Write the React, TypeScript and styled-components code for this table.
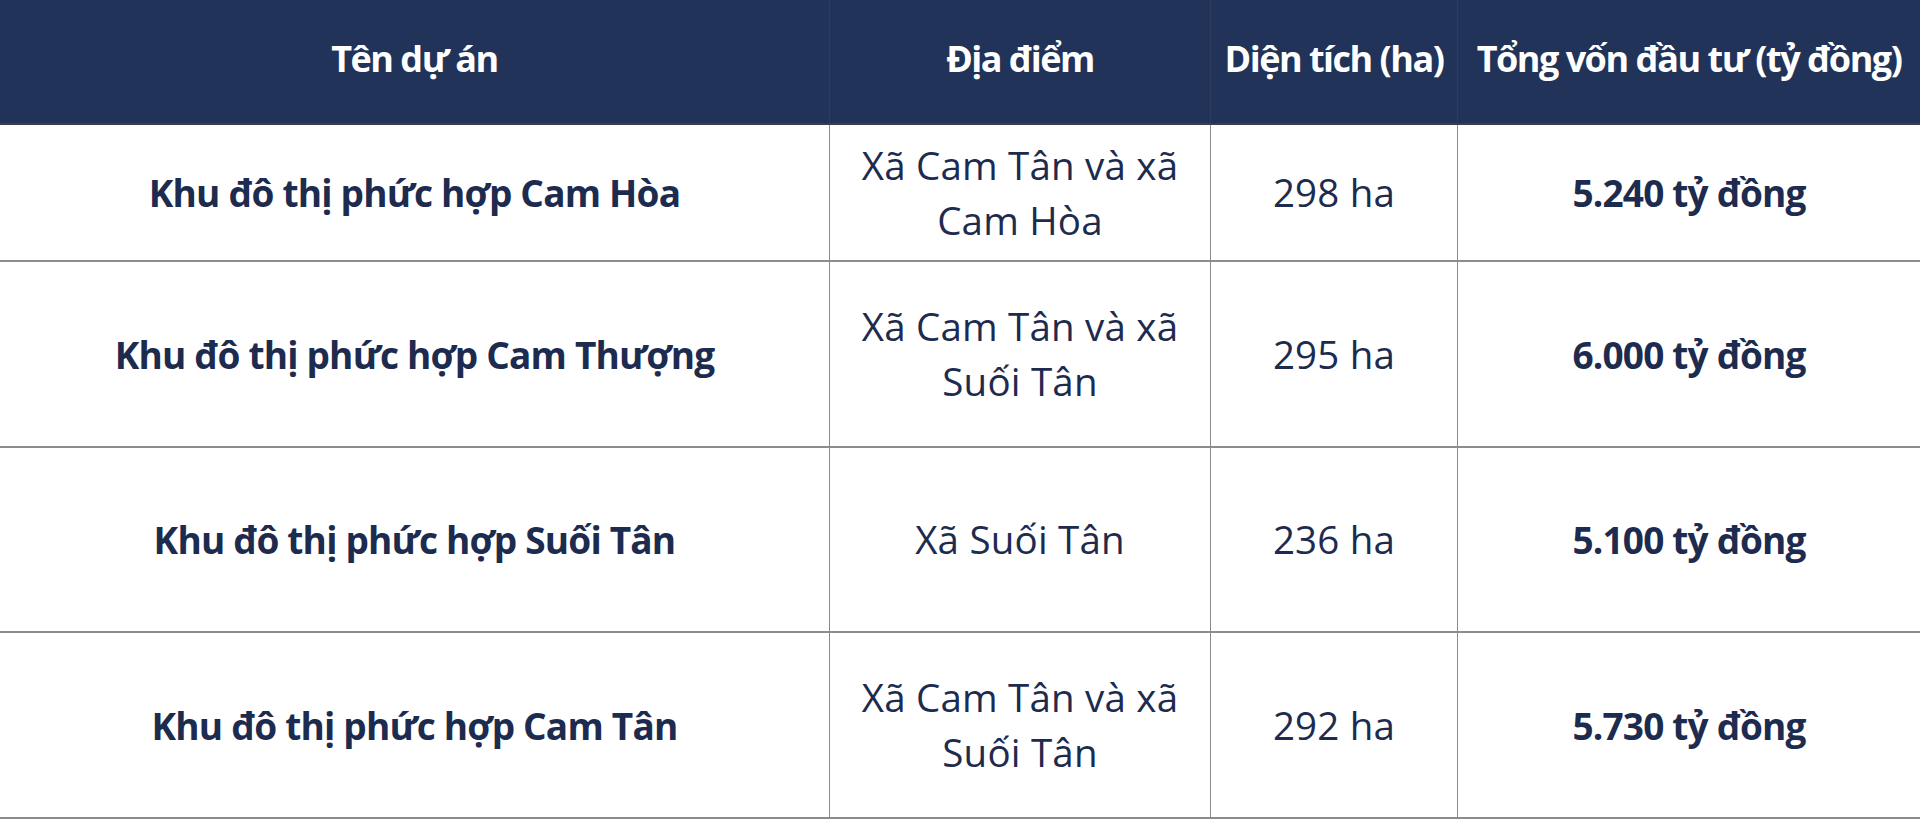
import React from "react";
import styled, { createGlobalStyle } from "styled-components";

const GlobalStyle = createGlobalStyle`
  html, body {
    margin: 0;
    padding: 0;
    background: #ffffff;
  }
  body {
    font-family: "Open Sans", "Noto Sans", "Liberation Sans", sans-serif;
  }
`;

interface ProjectRow {
  name: string;
  location: string;
  area: string;
  capital: string;
}

const projects: ProjectRow[] = [
  {
    name: "Khu đô thị phức hợp Cam Hòa",
    location: "Xã Cam Tân và xã Cam Hòa",
    area: "298 ha",
    capital: "5.240 tỷ đồng",
  },
  {
    name: "Khu đô thị phức hợp Cam Thượng",
    location: "Xã Cam Tân và xã Suối Tân",
    area: "295 ha",
    capital: "6.000 tỷ đồng",
  },
  {
    name: "Khu đô thị phức hợp Suối Tân",
    location: "Xã Suối Tân",
    area: "236 ha",
    capital: "5.100 tỷ đồng",
  },
  {
    name: "Khu đô thị phức hợp Cam Tân",
    location: "Xã Cam Tân và xã Suối Tân",
    area: "292 ha",
    capital: "5.730 tỷ đồng",
  },
];

const headers = [
  "Tên dự án",
  "Địa điểm",
  "Diện tích (ha)",
  "Tổng vốn đầu tư (tỷ đồng)",
];

const Table = styled.div`
  display: grid;
  width: 1920px;
  grid-template-columns: 830px 381px 247px 462px;
  grid-template-rows: 125px 137px 186px 185px 186px;
  background: #ffffff;
`;

const HeadCell = styled.div<{ $last?: boolean }>`
  display: flex;
  align-items: center;
  justify-content: center;
  box-sizing: border-box;
  background: #213358;
  color: #ffffff;
  font-size: 36px;
  font-weight: 700;
  letter-spacing: -1.5px;
  white-space: nowrap;
  padding-bottom: 6px;
  border-right: ${(p) => (p.$last ? "none" : "1px solid #2f3d5c")};
  border-bottom: 2px solid #3b3f4c;
`;

const Cell = styled.div<{ $bold?: boolean; $last?: boolean }>`
  display: flex;
  align-items: center;
  justify-content: center;
  box-sizing: border-box;
  text-align: center;
  color: #1d2b4f;
  font-size: ${(p) => (p.$bold ? "37px" : "38.5px")};
  line-height: 55px;
  font-weight: ${(p) => (p.$bold ? 700 : 400)};
  letter-spacing: ${(p) => (p.$bold ? "-0.8px" : "0.2px")};
  border-right: ${(p) => (p.$last ? "none" : "1px solid #8a8a8a")};
  border-bottom: 2px solid #8c8c8c;
`;

export default function App() {
  return (
    <>
      <GlobalStyle />
      <Table>
        {headers.map((h, i) => (
          <HeadCell key={h} $last={i === headers.length - 1}>
            {h}
          </HeadCell>
        ))}
        {projects.map((p) => (
          <React.Fragment key={p.name}>
            <Cell $bold>{p.name}</Cell>
            <Cell>{p.location}</Cell>
            <Cell>{p.area}</Cell>
            <Cell $bold $last>
              {p.capital}
            </Cell>
          </React.Fragment>
        ))}
      </Table>
    </>
  );
}
